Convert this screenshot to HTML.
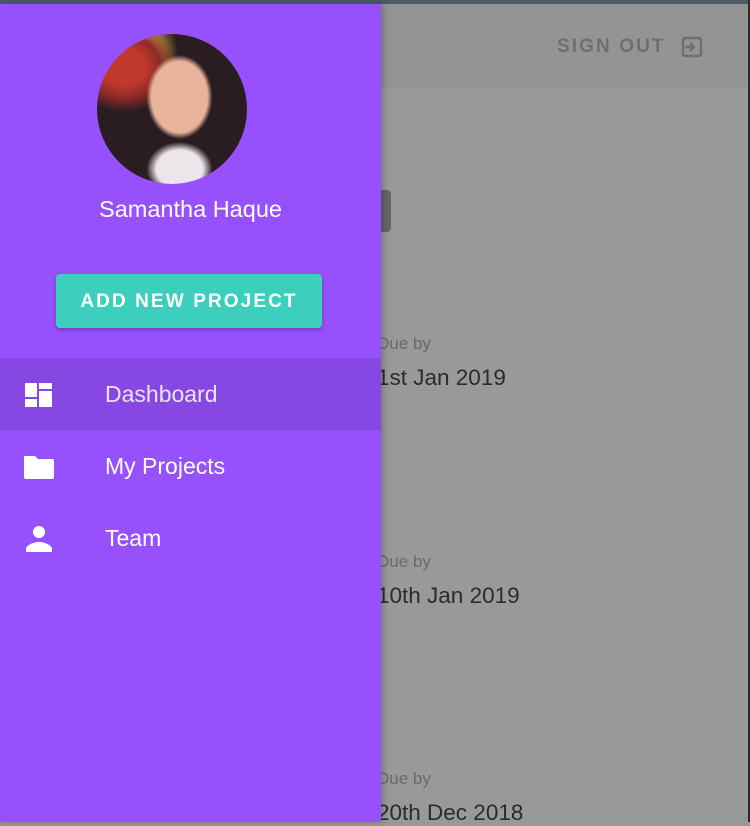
<!DOCTYPE html>
<html><head><meta charset="utf-8"><style>
*{margin:0;padding:0;box-sizing:border-box}
body{width:750px;height:822px;overflow:hidden;background:#999;font-family:"Liberation Sans",sans-serif;position:relative}
.topstrip{position:absolute;left:0;top:0;width:750px;height:4px;background:#4d5c63}
.hdr{position:absolute;left:0;top:4px;width:748px;height:84px;background:#949494}
.rightedge{position:absolute;left:748px;top:0;width:2px;height:822px;background:#2a2a2a}
.signout{position:absolute;left:557px;top:36px;font-size:19px;letter-spacing:2.1px;color:#6f6f6f;font-weight:bold}
.soicon{position:absolute;left:680px;top:35px}
.chip{position:absolute;left:370px;top:190px;width:21px;height:42px;background:#666;border-radius:4px}
.due{position:absolute;left:377px;color:#6a6a6a;font-size:17px}
.date{position:absolute;left:377px;color:#2b2b2b;font-size:22.5px}
.drawer{position:absolute;left:0;top:4px;width:381px;height:818px;background:#9650fc;box-shadow:2px 0 6px rgba(0,0,0,.25)}
.avatar{position:absolute;left:97px;width:150px;height:150px;border-radius:50%;overflow:hidden;background:
radial-gradient(ellipse 22% 28% at 55% 42%,#e7b39a 0 85%,transparent 100%),
radial-gradient(ellipse 22% 18% at 55% 90%,#ece6ea 0 70%,transparent 100%),
radial-gradient(ellipse 35% 30% at 18% 22%,#c0392b 0 40%,#8a2a28 70%,transparent 100%),
radial-gradient(circle at 25% 12%,#d9b23a 0 12%,transparent 25%),
#2a1d22}
.name{position:absolute;left:0;width:381px;text-align:center;color:#fff;font-size:23.5px}
.btn{position:absolute;left:56px;width:266px;height:54px;background:#3ccfbd;border-radius:4px;color:#fff;font-weight:bold;font-size:19px;letter-spacing:2.1px;text-align:center;line-height:56px;box-shadow:0 2px 4px rgba(0,0,0,.25)}
.item{position:absolute;left:0;width:381px;height:72px}
.item .t{position:absolute;left:105px;top:23px;font-size:23px;color:#fff}
.item svg{position:absolute;left:22px;top:20px}
</style></head><body>
<div class="topstrip"></div>
<div class="hdr"></div>
<div class="signout">SIGN OUT</div>
<svg class="soicon" width="24" height="24" viewBox="0 0 24 24"><rect x="3" y="3" width="18" height="18" rx="2" fill="none" stroke="#6f6f6f" stroke-width="2.4"/><path d="M5 12h9M10 8l4 4-4 4" fill="none" stroke="#6f6f6f" stroke-width="2.4"/></svg>
<div class="chip"></div>
<div class="due" style="top:334px">Due by</div><div class="date" style="top:365px">1st Jan 2019</div>
<div class="due" style="top:552px">Due by</div><div class="date" style="top:583px">10th Jan 2019</div>
<div class="due" style="top:769px">Due by</div><div class="date" style="top:800px">20th Dec 2018</div>
<div class="rightedge"></div>
<div class="drawer">
<div class="avatar" style="top:30px"></div>
<div class="name" style="top:192px">Samantha Haque</div>
<div class="btn" style="top:270px">ADD NEW PROJECT</div>
<div class="item" style="top:354px;background:#8747e2"><svg width="34" height="34" viewBox="0 0 34 34"><rect x="3" y="5" width="12" height="14" fill="#fff"/><rect x="17" y="5" width="13" height="6" fill="#fff"/><rect x="3" y="21" width="12" height="8" fill="#fff"/><rect x="17" y="13" width="13" height="16" fill="#fff"/></svg><div class="t" style="color:#ece4f8">Dashboard</div></div>
<div class="item" style="top:426px"><svg width="34" height="34" viewBox="0 0 34 34"><path d="M2 6h11l3 3h14a2 2 0 0 1 2 2v16a2 2 0 0 1-2 2H4a2 2 0 0 1-2-2z" fill="#fff"/></svg><div class="t">My Projects</div></div>
<div class="item" style="top:498px"><svg width="34" height="34" viewBox="0 0 34 34"><circle cx="17" cy="10" r="6" fill="#fff"/><path d="M4 30v-3c0-4 8-7 13-7s13 3 13 7v3z" fill="#fff"/></svg><div class="t">Team</div></div>
</div>
</body></html>
